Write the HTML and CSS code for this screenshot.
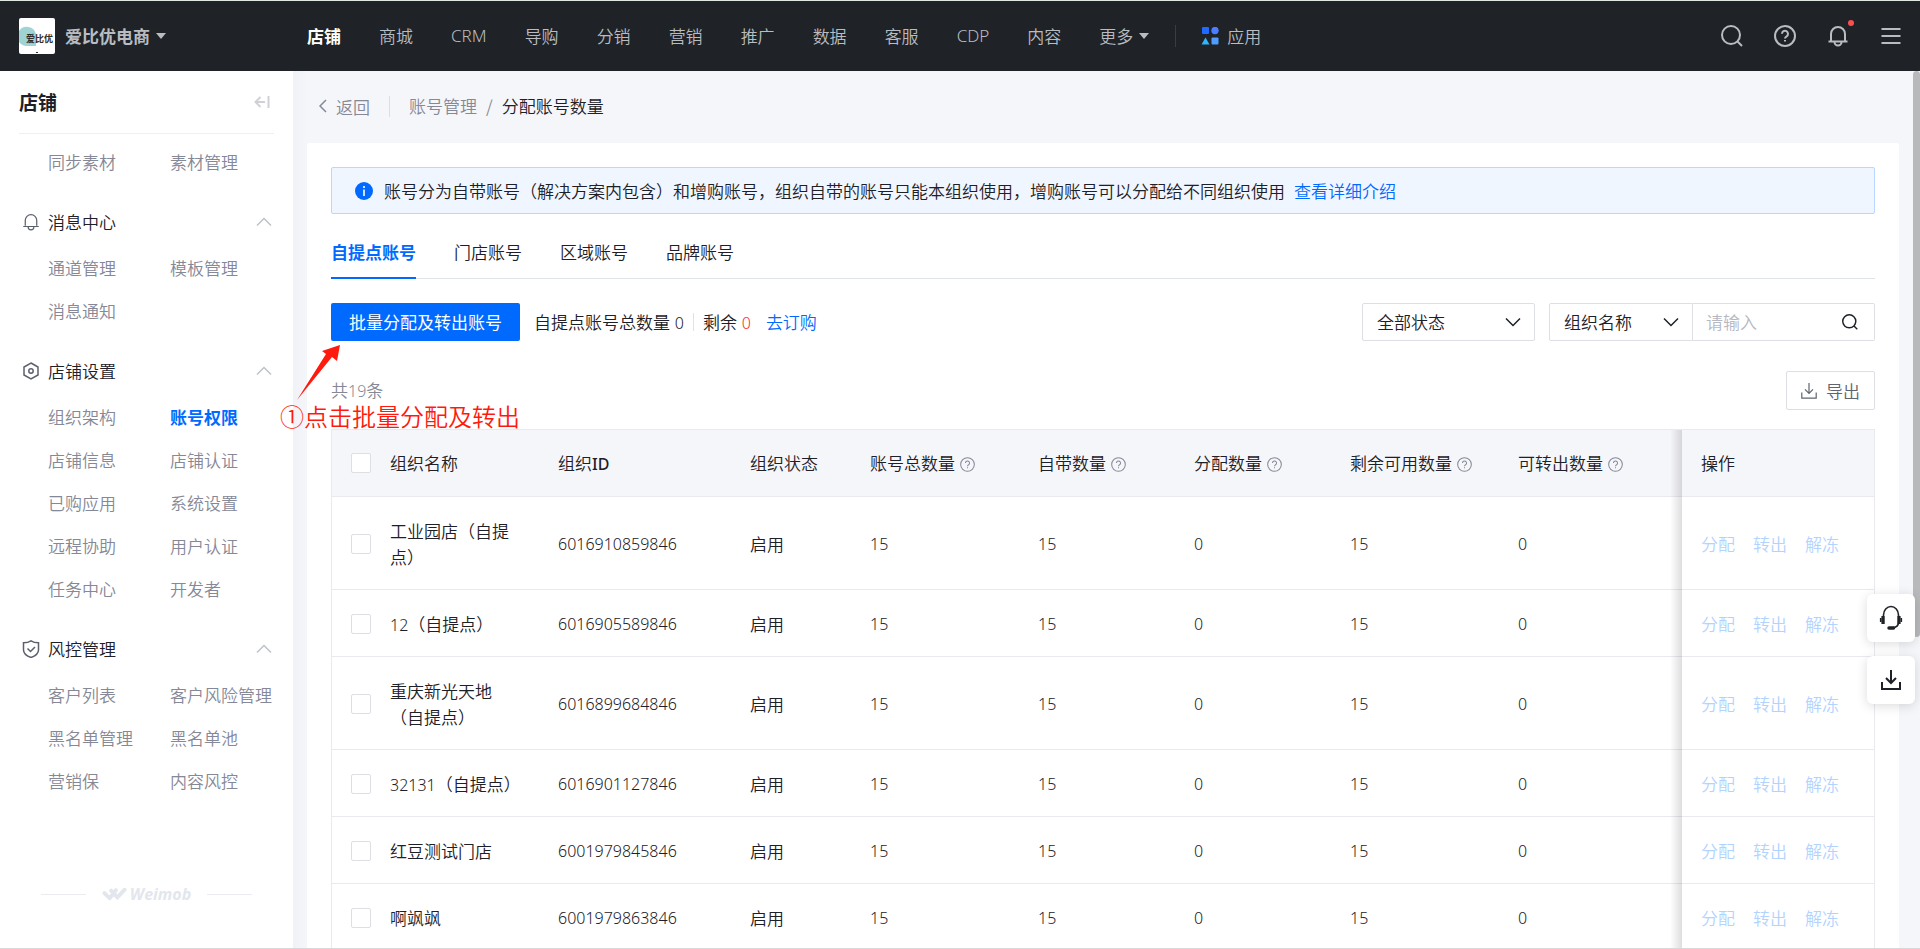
FILE: index.html
```
<!DOCTYPE html>
<html lang="zh-CN">
<head>
<meta charset="utf-8">
<title>分配账号数量</title>
<link rel="stylesheet" href="styles.css">
</head>
<body>
<svg class="defs" aria-hidden="true">
  <symbol id="i-up" viewBox="0 0 16 10"><path d="M1 8.5 8 1.5l7 7"/></symbol>
  <symbol id="i-down" viewBox="0 0 16 10"><path d="M1 1.5l7 7 7-7"/></symbol>
  <symbol id="i-search" viewBox="0 0 22 22"><circle cx="10" cy="10" r="9"/><path d="M16.5 16.5 21 21"/></symbol>
  <symbol id="i-help" viewBox="0 0 22 22"><circle cx="11" cy="11" r="10"/><path d="M8 8.8a3 3 0 1 1 4.6 2.5c-1 .6-1.6 1-1.6 2.2M11 15v1.6"/></symbol>
  <symbol id="i-bell" viewBox="0 0 20 22"><path d="M3 15.500V9a7 7 0 0 1 14 0v6.500M.5 16.500h19M6.500 17a3.500 3.500 0 0 0 7 0"/></symbol>
  <symbol id="i-down-tray" viewBox="0 0 20 20"><path d="M10 0v12.500M5 8l5 5 5-5M1 12v7h18v-7"/></symbol>
</svg>

<header class="topbar">
  <div class="brand">
    <svg class="brand-logo" viewBox="0 0 36 36" role="img" aria-label="爱比优">
      <rect width="36" height="36" rx="2" fill="#fff"/>
      <path d="M0 13a9.500 9.500 0 0 1 17 3v12H8a10 10 0 0 1-8-4z" fill="#9fd3d4"/>
      <text x="7" y="24" class="brand-mark">爱比优</text>
      <path d="M17 34.500h2" stroke="#333" stroke-width="1"/>
    </svg>
    <button class="brand-name" type="button">爱比优电商<span class="caret"></span></button>
  </div>
  <nav class="nav">
    <a class="nav-link is-active" href="#">店铺</a>
    <a class="nav-link" href="#">商城</a>
    <a class="nav-link latin" href="#">CRM</a>
    <a class="nav-link" href="#">导购</a>
    <a class="nav-link" href="#">分销</a>
    <a class="nav-link" href="#">营销</a>
    <a class="nav-link" href="#">推广</a>
    <a class="nav-link" href="#">数据</a>
    <a class="nav-link" href="#">客服</a>
    <a class="nav-link latin" href="#">CDP</a>
    <a class="nav-link" href="#">内容</a>
    <a class="nav-link" href="#">更多<span class="caret"></span></a>
    <a class="nav-link nav-apps" href="#">
      <svg class="apps-icon" viewBox="0 0 18 18" aria-hidden="true"><rect x="1" y="0" width="7" height="7" rx="1" fill="#1f6bff"/><circle cx="14" cy="3.500" r="3.700" fill="#4b7dff"/><path d="M4.500 10.500 8.500 17.500H.500z" fill="#2fb4ff"/><rect x="10.500" y="10.500" width="7" height="7" rx="1" fill="#4f9bff"/></svg>应用</a>
  </nav>
  <div class="tools">
    <button type="button" class="tool" aria-label="搜索"><svg class="icon s22"><use href="#i-search"/></svg></button>
    <button type="button" class="tool" aria-label="帮助"><svg class="icon s22"><use href="#i-help"/></svg></button>
    <button type="button" class="tool has-dot" aria-label="通知"><svg class="icon s22"><use href="#i-bell"/></svg></button>
    <button type="button" class="tool" aria-label="菜单"><svg class="icon s22" viewBox="0 0 22 22"><path d="M1.500 4h19M1.500 11h19M1.500 18h19"/></svg></button>
  </div>
</header>

<div class="layout">
  <aside class="sidebar">
    <div class="side-head">
      <h1 class="side-title">店铺</h1>
      <button type="button" class="collapse" aria-label="收起"><svg class="icon" viewBox="0 0 16 12"><path d="M11 6H1.500M6.500 1 1.500 6l5 5M14.500 0v12"/></svg></button>
    </div>
    <nav class="menu">
      <div class="menu-grid">
        <a href="#">同步素材</a><a href="#">素材管理</a>
      </div>
      <button type="button" class="menu-title"><svg class="icon s18"><use href="#i-bell"/></svg>消息中心<svg class="icon chev"><use href="#i-up"/></svg></button>
      <div class="menu-grid">
        <a href="#">通道管理</a><a href="#">模板管理</a>
        <a href="#">消息通知</a>
      </div>
      <button type="button" class="menu-title"><svg class="icon s18" viewBox="0 0 18 18"><path d="M9 1l7 4v8l-7 4-7-4V5z"/><circle cx="9" cy="9" r="2.200"/></svg>店铺设置<svg class="icon chev"><use href="#i-up"/></svg></button>
      <div class="menu-grid">
        <a href="#">组织架构</a><a href="#" class="is-current">账号权限</a>
        <a href="#">店铺信息</a><a href="#">店铺认证</a>
        <a href="#">已购应用</a><a href="#">系统设置</a>
        <a href="#">远程协助</a><a href="#">用户认证</a>
        <a href="#">任务中心</a><a href="#">开发者</a>
      </div>
      <button type="button" class="menu-title"><svg class="icon s18" viewBox="0 0 18 18"><path d="M9 .8c2.200 1.500 4.500 2 7.500 2V10c0 3.500-3.500 6-7.500 7.500C5 16 1.500 13.500 1.500 10V2.800c3 0 5.300-.5 7.500-2zM5.500 8.500l3 3 4.500-4.500"/></svg>风控管理<svg class="icon chev"><use href="#i-up"/></svg></button>
      <div class="menu-grid">
        <a href="#">客户列表</a><a href="#">客户风险管理</a>
        <a href="#">黑名单管理</a><a href="#">黑名单池</a>
        <a href="#">营销保</a><a href="#">内容风控</a>
      </div>
    </nav>
    <div class="side-foot">
      <span class="foot-logo"><svg viewBox="0 0 26 14" class="foot-mark" aria-hidden="true"><path d="M2.500 6 7 10.500M9.500 3.500 16 10.500l7.500-8M8 11.500 14.500 3"/></svg>Weimob</span>
    </div>
  </aside>

  <main class="main">
    <div class="crumbs">
      <a class="back" href="#"><svg class="icon" viewBox="0 0 8 14"><path d="M7 1 1 7l6 6"/></svg>返回</a>
      <a class="crumb" href="#">账号管理</a><span class="slash">/</span><span class="crumb-now">分配账号数量</span>
    </div>

    <section class="card">
      <div class="alert">
        <svg class="alert-icon" viewBox="0 0 18 18" aria-hidden="true"><circle cx="9" cy="9" r="9" fill="#006aff"/><path d="M9 4v2M9 7.500V14" stroke="#fff" stroke-width="1.600"/></svg>
        <span>账号分为自带账号（解决方案内包含）和增购账号，组织自带的账号只能本组织使用，增购账号可以分配给不同组织使用</span>
        <a class="link" href="#">查看详细介绍</a>
      </div>

      <div class="tabs" role="tablist">
        <button type="button" role="tab" class="tab is-on" aria-selected="true">自提点账号</button>
        <button type="button" role="tab" class="tab">门店账号</button>
        <button type="button" role="tab" class="tab">区域账号</button>
        <button type="button" role="tab" class="tab">品牌账号</button>
      </div>

      <div class="bar">
        <div class="primary-wrap">
          <button type="button" class="primary">批量分配及转出账号</button>
          <div class="note">
            <svg class="note-arrow" viewBox="0 0 44 56" aria-hidden="true"><path d="M43 0 40 16l-5-4L0 55 29 9l-4-3z" fill="#ff1a0e"/></svg>
            <span>①点击批量分配及转出</span>
          </div>
        </div>
        <p class="stat total">自提点账号总数量 <span class="num">0</span></p>
        <p class="stat">剩余 <span class="num red">0</span></p>
        <a class="link order" href="#">去订购</a>
        <div class="filters">
          <label class="pick status"><select aria-label="状态"><option>全部状态</option></select><svg class="icon chev"><use href="#i-down"/></svg></label>
          <div class="combo">
            <label class="pick field"><select aria-label="搜索字段"><option>组织名称</option></select><svg class="icon chev"><use href="#i-down"/></svg></label>
            <label class="query"><input type="text" aria-label="关键字" placeholder="请输入"><svg class="icon s16"><use href="#i-search"/></svg></label>
          </div>
        </div>
      </div>

      <div class="count-row">
        <p class="count">共<span class="num">19</span>条</p>
        <button type="button" class="export"><svg class="icon s16"><use href="#i-down-tray"/></svg>导出</button>
      </div>

      <table class="grid">
        <colgroup><col class="c-check"><col class="c-name"><col class="c-id"><col class="c-state"><col class="c-total"><col class="c-own"><col class="c-own"><col class="c-total"><col><col class="c-ops"></colgroup>
        <thead>
          <tr>
            <th class="check"><input type="checkbox" aria-label="全选"></th>
            <th>组织名称</th><th>组织<span class="num strong">ID</span></th><th>组织状态</th>
            <th>账号总数量<svg class="icon hint"><use href="#i-help"/></svg></th>
            <th>自带数量<svg class="icon hint"><use href="#i-help"/></svg></th>
            <th>分配数量<svg class="icon hint"><use href="#i-help"/></svg></th>
            <th>剩余可用数量<svg class="icon hint"><use href="#i-help"/></svg></th>
            <th>可转出数量<svg class="icon hint"><use href="#i-help"/></svg></th>
            <th class="ops">操作</th>
          </tr>
        </thead>
        <tbody>
          <tr><td class="check"><input type="checkbox" aria-label="选择"></td><td>工业园店（自提点）</td><td class="num">6016910859846</td><td>启用</td><td class="num">15</td><td class="num">15</td><td class="num">0</td><td class="num">15</td><td class="num">0</td><td class="ops"><button type="button" disabled>分配</button><button type="button" disabled>转出</button><button type="button" disabled>解冻</button></td></tr>
          <tr><td class="check"><input type="checkbox" aria-label="选择"></td><td><span class="num">12</span>（自提点）</td><td class="num">6016905589846</td><td>启用</td><td class="num">15</td><td class="num">15</td><td class="num">0</td><td class="num">15</td><td class="num">0</td><td class="ops"><button type="button" disabled>分配</button><button type="button" disabled>转出</button><button type="button" disabled>解冻</button></td></tr>
          <tr><td class="check"><input type="checkbox" aria-label="选择"></td><td>重庆新光天地（自提点）</td><td class="num">6016899684846</td><td>启用</td><td class="num">15</td><td class="num">15</td><td class="num">0</td><td class="num">15</td><td class="num">0</td><td class="ops"><button type="button" disabled>分配</button><button type="button" disabled>转出</button><button type="button" disabled>解冻</button></td></tr>
          <tr><td class="check"><input type="checkbox" aria-label="选择"></td><td><span class="num">32131</span>（自提点）</td><td class="num">6016901127846</td><td>启用</td><td class="num">15</td><td class="num">15</td><td class="num">0</td><td class="num">15</td><td class="num">0</td><td class="ops"><button type="button" disabled>分配</button><button type="button" disabled>转出</button><button type="button" disabled>解冻</button></td></tr>
          <tr><td class="check"><input type="checkbox" aria-label="选择"></td><td>红豆测试门店</td><td class="num">6001979845846</td><td>启用</td><td class="num">15</td><td class="num">15</td><td class="num">0</td><td class="num">15</td><td class="num">0</td><td class="ops"><button type="button" disabled>分配</button><button type="button" disabled>转出</button><button type="button" disabled>解冻</button></td></tr>
          <tr><td class="check"><input type="checkbox" aria-label="选择"></td><td>啊飒飒</td><td class="num">6001979863846</td><td>启用</td><td class="num">15</td><td class="num">15</td><td class="num">0</td><td class="num">15</td><td class="num">0</td><td class="ops"><button type="button" disabled>分配</button><button type="button" disabled>转出</button><button type="button" disabled>解冻</button></td></tr>
        </tbody>
      </table>
    </section>
    <div class="scroll-thumb"></div>
  </main>
</div>

<div class="floaters">
  <button type="button" class="floater" aria-label="客服"><svg viewBox="0 0 24 26" class="headset"><path d="M4.500 19V10a7.500 8.500 0 0 1 15 0v7c0 3.500-2 5.500-6 5.500"/><path d="M4 11v8M20 11v8" stroke-width="3.200"/><path d="M10 23h4.500" stroke-width="3.500" stroke-linecap="round"/><path d="M1.700 13v4M22.300 13v4"/></svg></button>
  <button type="button" class="floater" aria-label="下载"><svg class="icon s20"><use href="#i-down-tray"/></svg></button>
</div>
</body>
</html>
```

FILE: styles.css
```
* { box-sizing: border-box; }

body {
  margin: 0;
  height: 100vh;
  display: flex;
  flex-direction: column;
  overflow: hidden;
  border-top: 1px solid #dde8e0;
  border-bottom: 1px solid #d6d8da;
  background: #f5f6fa;
  color: #1d2026;
  font: 350 17px/26px "Noto Sans CJK SC", "Noto Sans", sans-serif;
}

a { color: inherit; text-decoration: none; }
p, h1 { margin: 0; }
button, input, select { font: inherit; color: inherit; margin: 0; }
button { padding: 0; border: 0; background: none; cursor: pointer; }
.num { font-family: "Noto Sans", sans-serif; font-size: 16px; }
span.num { line-height: 16px; }
.defs { display: none; }
.icon { flex: none; fill: none; stroke: currentColor; stroke-width: 1.5; }
.s16 { width: 16px; height: 16px; }
.s18 { width: 18px; height: 18px; }
.s20 { width: 20px; height: 20px; }
.s22 { width: 22px; height: 22px; stroke-width: 2; }
.chev { width: 16px; height: 10px; }
.link { color: #006aff; }
.red { color: #ff2b2b; }

/* Top bar */
.topbar {
  flex: none;
  display: flex;
  align-items: center;
  height: 70px;
  padding: 0 18px 0 19px;
  background: #1f2327;
  color: #b9bcc1;
}
.brand { display: flex; align-items: center; gap: 10px; width: 288px; }
.brand-logo { width: 36px; height: 36px; }
.brand-mark { font-size: 9px; font-weight: 700; fill: #2b2b2b; }
.brand-name { font-weight: 700; }
.caret {
  display: inline-block;
  margin-left: 6px;
  vertical-align: 4px;
  border: 5px solid transparent;
  border-top: 6px solid currentColor;
  border-bottom: 0;
}
.nav { display: flex; align-items: center; gap: 38px; }
.nav-link.is-active { color: #fff; font-weight: 700; }
.latin { font-family: "Noto Sans", sans-serif; }
.nav-apps { display: flex; align-items: center; gap: 8px; margin-left: -12px; padding-left: 25px; border-left: 1px solid #3a3e44; line-height: 22px; }
.apps-icon { width: 18px; height: 18px; }
.tools { display: flex; gap: 31px; margin-left: auto; }
.tool { display: flex; position: relative; }
.has-dot::after {
  content: "";
  position: absolute;
  top: -5px;
  right: -5px;
  width: 6px;
  height: 6px;
  border-radius: 50%;
  background: #ff4d4f;
}

/* Sidebar */
.layout { flex: 1; min-height: 0; display: flex; overflow: hidden; }
.sidebar { flex: none; display: flex; flex-direction: column; width: 293px; padding: 0 19px; background: #fff; }
.side-head {
  display: flex;
  align-items: center;
  justify-content: space-between;
  height: 63px;
  padding-right: 4px;
  border-bottom: 1px solid #eeeff2;
}
.side-title { font-size: 19px; font-weight: 700; }
.collapse { color: #cfd1d6; }
.collapse .icon { display: block; width: 16px; height: 12px; stroke-width: 2; }
.menu { padding-top: 6px; }
.menu-grid { display: grid; grid-template-columns: 122px 1fr; padding-left: 29px; line-height: 43px; color: #858896; white-space: nowrap; }
.menu-grid .is-current { color: #006aff; font-weight: 700; }
.menu-title { display: flex; align-items: center; gap: 8px; width: 100%; height: 24px; margin: 27px 0 12px; padding: 0 2px 0 3px; }
.menu-title .icon { color: #5c606d; }
.menu-title .chev { margin-left: auto; color: #bfc2c9; }
.side-foot { display: flex; align-items: center; gap: 16px; margin: auto 22px 42px; }
.side-foot::before, .side-foot::after { content: ""; flex: 1; height: 1px; background: #eaecf0; }
.foot-logo { display: flex; align-items: center; gap: 3px; color: #e3e6ed; font: italic 700 16px/24px "Open Sans", sans-serif; }
.foot-mark { width: 25px; height: 14px; fill: none; stroke: currentColor; stroke-width: 4; stroke-linecap: round; }

/* Main */
.main { position: relative; flex: 1; min-width: 0; padding: 0 21px 0 14px; background: linear-gradient(90deg, #f1f2f7, #f5f6fa 14px); }
.crumbs { display: flex; align-items: center; height: 72px; padding: 0 0 2px 12px; color: #858896; }
.back { display: flex; align-items: center; gap: 9px; padding-right: 19px; border-right: 1px solid #dcdee4; line-height: 21px; }
.back .icon { width: 8px; height: 14px; }
.crumb { padding-left: 19px; }
.slash { padding: 0 9px; }
.crumb-now { color: #1d2026; }
.card { padding: 24px 24px 0; border-radius: 3px 3px 0 0; background: #fff; }

.alert { display: flex; align-items: center; height: 47px; padding-left: 23px; border: 1px solid #b9d7ff; border-radius: 2px; background: #f0f6ff; white-space: nowrap; }
.alert-icon { width: 18px; height: 18px; margin-right: 11px; }
.alert .link { margin-left: 9px; }

.tabs { display: flex; gap: 38px; height: 65px; border-bottom: 1px solid #e0e3e9; }
.tab { height: 65px; padding-top: 12px; border-bottom: 2px solid transparent; }
.tab.is-on { border-color: #006aff; color: #006aff; font-weight: 700; }

.bar { display: flex; align-items: center; margin-top: 24px; }
.primary-wrap { position: relative; margin-right: 14px; }
.primary { height: 38px; padding: 0 18px; border-radius: 2px; background: #006aff; color: #fff; font-weight: 400; }
.note { position: absolute; z-index: 2; top: 42px; left: -51px; width: max-content; color: #ff1a0e; font-size: 24px; line-height: 30px; }
.note-arrow { display: block; width: 44px; height: 56px; margin: 0 0 0 17px; }
.stat .num { margin-left: 1px; }
.stat.total { margin-right: 9px; padding-right: 9px; border-right: 1px solid #e0e2e8; line-height: 18px; }
.order { margin-left: 15px; }
.filters { display: flex; gap: 14px; margin-left: auto; }
.pick { display: flex; align-items: center; position: relative; }
.pick select { width: 100%; height: 38px; padding: 0 14px; appearance: none; border: 1px solid #dddfe5; border-radius: 2px; background: #fff; }
.pick .chev { position: absolute; right: 14px; pointer-events: none; }
.status { width: 173px; }
.field { width: 144px; }
.combo { display: flex; }
.combo select { border-radius: 2px 0 0 2px; }
.query { display: flex; align-items: center; width: 182px; height: 38px; padding: 0 16px 0 13px; border: 1px solid #dddfe5; border-left: 0; border-radius: 0 2px 2px 0; }
.query input { flex: 1; min-width: 0; padding: 0; border: 0; outline: 0; background: none; }
.query input::placeholder { color: #b5b8c0; }
.query .icon { stroke-width: 2; }

.count-row { display: flex; align-items: center; justify-content: space-between; margin: 30px 0 19px; }
.count { padding-bottom: 2px; color: #858896; }
.export { display: flex; align-items: center; gap: 9px; height: 39px; padding: 0 14px; border: 1px solid #dddfe5; border-radius: 2px; color: #5f6470; }

/* Table */
.grid { width: 100%; table-layout: fixed; border: 1px solid #e8eaef; border-spacing: 0; }
.c-check { width: 39px; }
.c-name { width: 168px; }
.c-id { width: 192px; }
.c-state { width: 120px; }
.c-total { width: 168px; }
.c-own { width: 156px; }
.c-ops { width: 192px; }
.grid th, .grid td { padding: 21px 14px 19px 19px; border-bottom: 1px solid #e8eaef; text-align: left; vertical-align: middle; }
.grid th { padding-top: 20px; padding-bottom: 20px; background: #f5f6fa; font-weight: 350; white-space: nowrap; }
.grid .check { padding-right: 0; }
.check input { display: block; width: 20px; height: 20px; appearance: none; border: 1px solid #dddfe5; border-radius: 2px; background: #fff; }
.strong { font-weight: 500; }
.hint { width: 15px; height: 15px; margin-left: 5px; vertical-align: -2px; color: #858896; }
.grid .ops { position: relative; white-space: nowrap; }
.ops::before { content: ""; position: absolute; top: 0; bottom: -1px; left: -12px; width: 12px; background: linear-gradient(270deg, rgba(0, 0, 0, .13), rgba(0, 0, 0, 0)); }
.ops button { margin-right: 18px; vertical-align: top; color: #b3d3ff; }
.ops button:last-child { margin-right: 0; }

.scroll-thumb { position: absolute; top: 0; right: 0; width: 7px; height: 566px; border-radius: 4px; background: #b8b9bb; }
.floaters { position: fixed; z-index: 3; right: 5px; bottom: 245px; display: grid; gap: 14px; }
.floater { display: grid; place-items: center; width: 48px; height: 48px; border-radius: 6px; background: #fff; box-shadow: 0 2px 12px rgba(0, 0, 0, .14); }
.floater .icon { stroke-width: 2; }
.headset { width: 24px; height: 26px; fill: none; stroke: #1f2327; stroke-width: 1.6; }
```
